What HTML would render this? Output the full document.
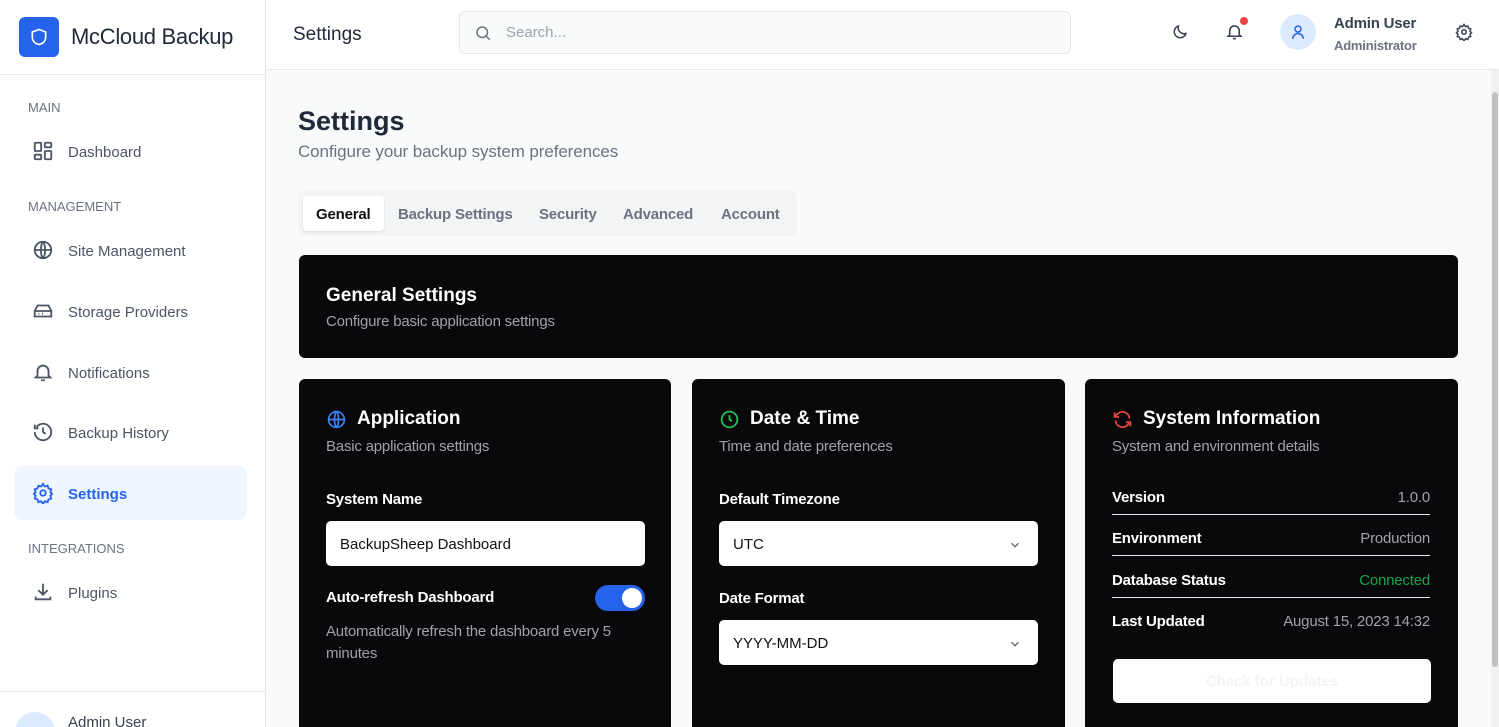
<!DOCTYPE html><html><head><style>
*{box-sizing:border-box;margin:0;padding:0}
html,body{width:1499px;height:727px;overflow:hidden}
body{font-family:"Liberation Sans",sans-serif;background:#f9fafb;position:relative;color:#1f2937}
.sb{position:absolute;left:0;top:0;width:266px;height:727px;background:#fff;border-right:1px solid #e5e7eb;overflow:hidden}
.logo{height:75px;border-bottom:1px solid #e5e7eb;display:flex;align-items:center;padding-left:19px}
.lb{width:40px;height:40px;background:#2563eb;border-radius:6px;display:flex;align-items:center;justify-content:center;margin-right:12px}
.lt{font-size:22px;color:#1f2937;letter-spacing:-0.3px}
.sec{position:absolute;left:28px;font-size:13px;color:#6b7280}
.it{position:absolute;left:14px;width:233px;height:54px;display:flex;align-items:center;padding-left:18px;font-size:15px;color:#4b5563;border-radius:8px}
.it span{position:relative;top:1px}
.it svg{margin-right:14px}
.it.a{background:#eff6ff;color:#2563eb;font-weight:bold}
.hd{position:absolute;left:266px;top:0;right:0;height:70px;background:#fff;border-bottom:1px solid #e5e7eb}
.card{position:absolute;background:#09090b;border-radius:6px;color:#fff}
.ct{font-size:19px;font-weight:bold;display:flex;align-items:center}
.cs{font-size:15px;color:#a1a1aa;letter-spacing:-0.2px}
.lab{position:absolute;font-size:15px;font-weight:bold;letter-spacing:-0.2px}
.inp{position:absolute;background:#fff;border-radius:5px;height:45px;color:#111;font-size:15px;display:flex;align-items:center;padding-left:14px;padding-top:2px}
.row{position:absolute;left:27px;width:318px;display:flex;justify-content:space-between;font-size:15px;border-bottom:1px solid #e5e7eb;padding-bottom:8px;letter-spacing:-0.2px}
.row span{color:#a1a1aa}
</style></head><body>
<div class="sb">
<div class="logo"><div class="lb"><svg width="20" height="20" viewBox="0 0 24 24" fill="none" stroke="#fff" stroke-width="2"><path d="M12 3l8 3v6c0 5-3.5 8-8 9-4.5-1-8-4-8-9V6z"/></svg></div><span class="lt">McCloud Backup</span></div>
<div class="sec" style="top:100px">MAIN</div>
<div class="it" style="top:124px"><svg width="22" height="22" viewBox="0 0 24 24" fill="none" stroke="#4b5563" stroke-width="2"><rect x="3" y="3" width="7" height="9" rx="1"/><rect x="14" y="3" width="7" height="5" rx="1"/><rect x="14" y="12" width="7" height="9" rx="1"/><rect x="3" y="16" width="7" height="5" rx="1"/></svg><span>Dashboard</span></div>
<div class="sec" style="top:199px">MANAGEMENT</div>
<div class="it" style="top:223px"><svg width="22" height="22" viewBox="0 0 24 24" fill="none" stroke="#4b5563" stroke-width="2"><circle cx="12" cy="12" r="9"/><path d="M3 12h18M12 3c3 3 3 15 0 18M12 3c-3 3-3 15 0 18"/></svg><span>Site Management</span></div>
<div class="it" style="top:284px"><svg width="22" height="22" viewBox="0 0 24 24" fill="none" stroke="#4b5563" stroke-width="2"><path d="M3 12h18v6H3zM3 12l3-6h12l3 6M7 15h1M11 15h1"/></svg><span>Storage Providers</span></div>
<div class="it" style="top:345px"><svg width="22" height="22" viewBox="0 0 24 24" fill="none" stroke="#4b5563" stroke-width="2"><path d="M6 16V11a6 6 0 0112 0v5l2 2H4zM10 21h4"/></svg><span>Notifications</span></div>
<div class="it" style="top:405px"><svg width="22" height="22" viewBox="0 0 24 24" fill="none" stroke="#4b5563" stroke-width="2"><path d="M3 12a9 9 0 109-9 9 9 0 00-7 3.5M3 4v4h4M12 7v5l3 2"/></svg><span>Backup History</span></div>
<div class="it a" style="top:466px"><svg width="22" height="22" viewBox="0 0 24 24" fill="none" stroke="#2563eb" stroke-width="2"><circle cx="12" cy="12" r="3"/><path d="M12 2l2 3 3-1 1 3 3 1-1 3 2 2-2 2 1 3-3 1-1 3-3-1-2 3-2-3-3 1-1-3-3-1 1-3-2-2 2-2-1-3 3-1 1-3 3 1z"/></svg><span>Settings</span></div>
<div class="sec" style="top:541px">INTEGRATIONS</div>
<div class="it" style="top:565px"><svg width="22" height="22" viewBox="0 0 24 24" fill="none" stroke="#4b5563" stroke-width="2"><path d="M12 3v12M7 10l5 5 5-5M4 17v3h16v-3"/></svg><span>Plugins</span></div>
<div style="position:absolute;top:691px;left:0;right:0;border-top:1px solid #e5e7eb"></div>
<div style="position:absolute;left:15px;top:712px;width:40px;height:40px;border-radius:50%;background:#dbeafe"></div>
<div style="position:absolute;left:68px;top:714px;font-size:15px;color:#374151">Admin User</div>
</div>
<div class="hd">
<div style="position:absolute;left:27px;top:24px;font-size:19px;color:#1f2937">Settings</div>
<div style="position:absolute;left:193px;top:11px;width:612px;height:43px;border:1px solid #e5e7eb;border-radius:6px;background:#f9fafb;display:flex;align-items:center;padding-left:14px;color:#9ca3af;font-size:15px"><svg width="18" height="18" viewBox="0 0 24 24" fill="none" stroke="#6b7280" stroke-width="2" style="margin-right:14px"><circle cx="11" cy="11" r="7"/><path d="M21 21l-5-5"/></svg>Search...</div>
<svg style="position:absolute;left:905px;top:23px" width="18" height="18" viewBox="0 0 24 24" fill="none" stroke="#374151" stroke-width="2"><path d="M20 14A8 8 0 0110 4a8 8 0 1010 10z"/></svg>
<svg style="position:absolute;left:959px;top:22px" width="19" height="19" viewBox="0 0 24 24" fill="none" stroke="#374151" stroke-width="2"><path d="M6 16V11a6 6 0 0112 0v5l2 2H4zM10 21h4"/></svg>
<div style="position:absolute;left:974px;top:17px;width:8px;height:8px;border-radius:50%;background:#ef4444"></div>
<div style="position:absolute;left:1014px;top:14px;width:36px;height:36px;border-radius:50%;background:#dbeafe;display:flex;align-items:center;justify-content:center"><svg width="18" height="18" viewBox="0 0 24 24" fill="none" stroke="#2563eb" stroke-width="2"><circle cx="12" cy="8" r="4"/><path d="M5 21a7 7 0 0114 0"/></svg></div>
<div style="position:absolute;left:1068px;top:15px;font-size:15px;font-weight:bold;color:#374151;letter-spacing:-0.2px">Admin User</div>
<div style="position:absolute;left:1068px;top:38px;font-size:13px;font-weight:bold;color:#6b7280;letter-spacing:-0.2px">Administrator</div>
<svg style="position:absolute;left:1189px;top:23px" width="18" height="18" viewBox="0 0 24 24" fill="none" stroke="#374151" stroke-width="2"><circle cx="12" cy="12" r="3"/><path d="M12 2l2 3 3-1 1 3 3 1-1 3 2 2-2 2 1 3-3 1-1 3-3-1-2 3-2-3-3 1-1-3-3-1 1-3-2-2 2-2-1-3 3-1 1-3 3 1z"/></svg>
</div>
<div style="position:absolute;right:0;top:70px;width:8px;height:657px;background:#f1f1f1"><div style="margin:22px 1px 0;height:575px;background:#c1c1c1;border-radius:4px"></div></div>
<div style="position:absolute;left:298px;top:106px;font-size:27px;font-weight:bold;color:#1f2937">Settings</div>
<div style="position:absolute;left:298px;top:142px;font-size:17px;color:#6b7280;letter-spacing:-0.1px">Configure your backup system preferences</div>
<div style="position:absolute;left:298px;top:191px;width:499px;height:45px;background:#f3f4f6;border-radius:6px;font-size:15px;font-weight:bold;color:#6b7280;letter-spacing:-0.2px">
<div style="position:absolute;left:5px;top:5px;width:81px;height:35px;background:#fff;border-radius:4px;box-shadow:0 1px 2px rgba(0,0,0,.1)"></div>
<span style="position:absolute;left:18px;top:15px;color:#111">General</span><span style="position:absolute;left:100px;top:15px">Backup Settings</span><span style="position:absolute;left:241px;top:15px">Security</span><span style="position:absolute;left:325px;top:15px">Advanced</span><span style="position:absolute;left:423px;top:15px">Account</span></div>
<div class="card" style="left:299px;top:255px;width:1159px;height:103px">
<div style="position:absolute;left:27px;top:30px;font-size:19px;font-weight:bold">General Settings</div>
<div class="cs" style="position:absolute;left:27px;top:58px">Configure basic application settings</div></div>
<div class="card" style="left:299px;top:379px;width:372px;height:360px">
<div class="ct" style="position:absolute;left:27px;top:29px"><svg width="21" height="21" viewBox="0 0 24 24" fill="none" stroke="#3b82f6" stroke-width="2" style="margin-right:10px"><circle cx="12" cy="12" r="9"/><path d="M3 12h18M12 3c3 3 3 15 0 18M12 3c-3 3-3 15 0 18"/></svg>Application</div>
<div class="cs" style="position:absolute;left:27px;top:59px">Basic application settings</div>
<div class="lab" style="left:27px;top:112px">System Name</div>
<div class="inp" style="left:27px;top:142px;width:319px">BackupSheep Dashboard</div>
<div class="lab" style="left:27px;top:210px">Auto-refresh Dashboard</div>
<div style="position:absolute;left:296px;top:206px;width:50px;height:26px;border-radius:13px;background:#2563eb"><div style="position:absolute;right:3px;top:3px;width:20px;height:20px;border-radius:50%;background:#fff"></div></div>
<div class="cs" style="position:absolute;left:27px;top:242px;width:320px;line-height:22px">Automatically refresh the dashboard every 5 minutes</div></div>
<div class="card" style="left:692px;top:379px;width:373px;height:360px">
<div class="ct" style="position:absolute;left:27px;top:29px"><svg width="21" height="21" viewBox="0 0 24 24" fill="none" stroke="#22c55e" stroke-width="2" style="margin-right:10px"><circle cx="12" cy="12" r="9"/><path d="M12 7v5l3 2"/></svg>Date &amp; Time</div>
<div class="cs" style="position:absolute;left:27px;top:59px">Time and date preferences</div>
<div class="lab" style="left:27px;top:112px">Default Timezone</div>
<div class="inp" style="left:27px;top:142px;width:319px">UTC<svg style="position:absolute;right:16px" width="14" height="14" viewBox="0 0 24 24" fill="none" stroke="#555" stroke-width="2"><path d="M6 9l6 6 6-6"/></svg></div>
<div class="lab" style="left:27px;top:211px">Date Format</div>
<div class="inp" style="left:27px;top:241px;width:319px">YYYY-MM-DD<svg style="position:absolute;right:16px" width="14" height="14" viewBox="0 0 24 24" fill="none" stroke="#555" stroke-width="2"><path d="M6 9l6 6 6-6"/></svg></div></div>
<div class="card" style="left:1085px;top:379px;width:373px;height:360px">
<div class="ct" style="position:absolute;left:27px;top:29px"><svg width="21" height="21" viewBox="0 0 24 24" fill="none" stroke="#ef4444" stroke-width="2" style="margin-right:10px"><path d="M20 11A8 8 0 006 6L3 9M3 4v5h5M4 13a8 8 0 0014 5l3-3M21 20v-5h-5"/></svg>System Information</div>
<div class="cs" style="position:absolute;left:27px;top:59px">System and environment details</div>
<div class="row" style="top:110px"><b>Version</b><span>1.0.0</span></div>
<div class="row" style="top:151px"><b>Environment</b><span>Production</span></div>
<div class="row" style="top:193px"><b>Database Status</b><span style="color:#16a34a">Connected</span></div>
<div class="row" style="top:234px;border:0"><b>Last Updated</b><span>August 15, 2023 14:32</span></div>
<div style="position:absolute;left:28px;top:280px;width:318px;height:44px;background:#fff;border-radius:5px;color:#f3f4f6;font-size:15px;font-weight:bold;display:flex;align-items:center;justify-content:center">Check for Updates</div></div>
</body></html>
